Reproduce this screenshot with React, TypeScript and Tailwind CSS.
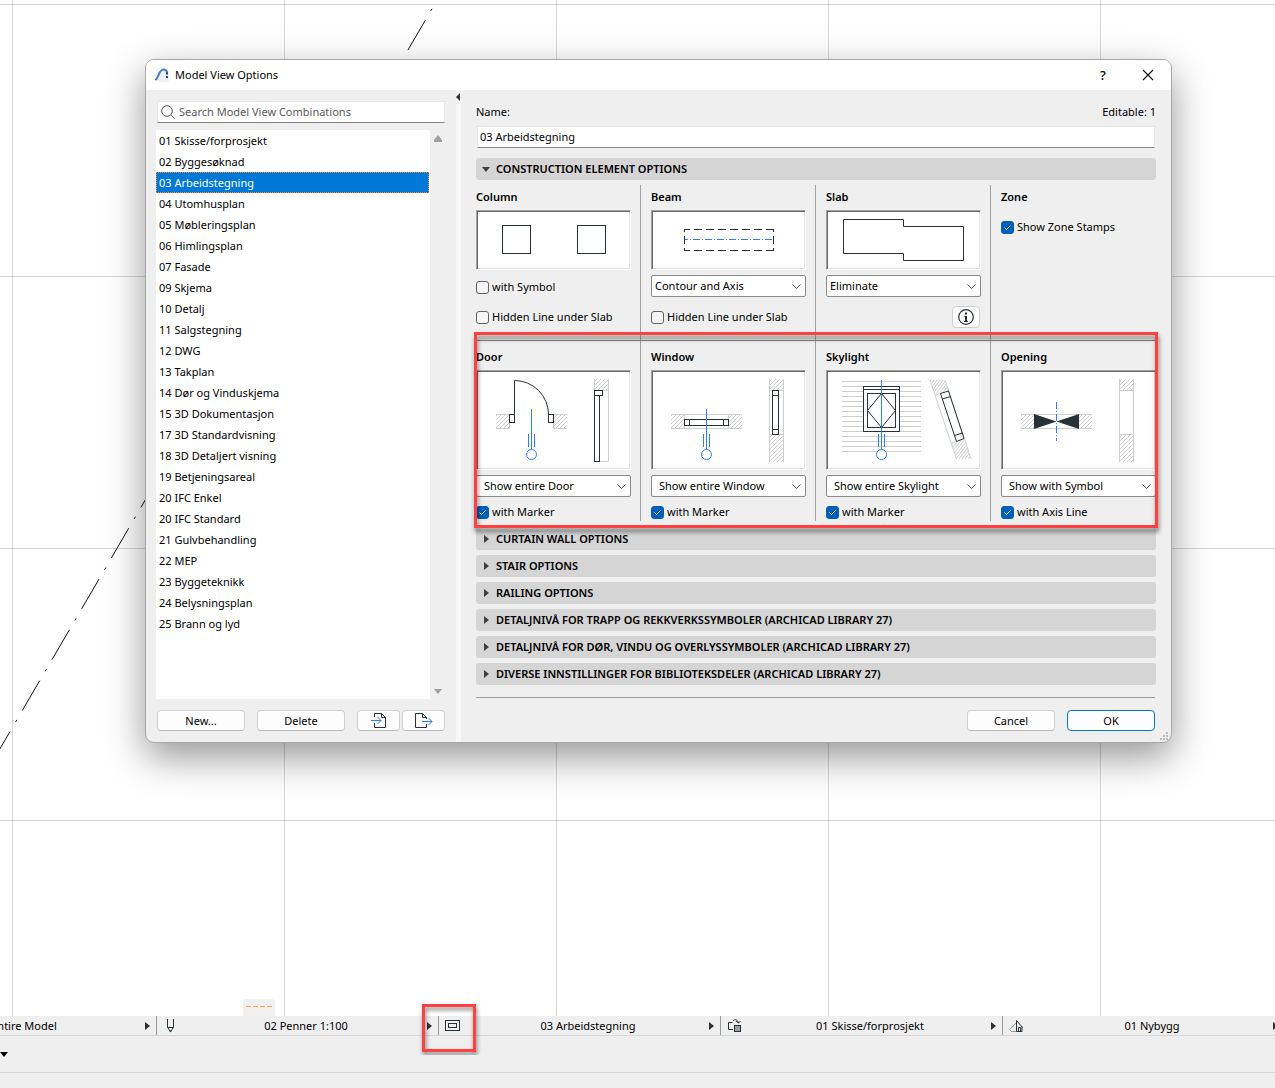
import type { ReactNode } from "react";

const COMBINATIONS = [
  "01 Skisse/forprosjekt",
  "02 Byggesøknad",
  "03 Arbeidstegning",
  "04 Utomhusplan",
  "05 Møbleringsplan",
  "06 Himlingsplan",
  "07 Fasade",
  "09 Skjema",
  "10 Detalj",
  "11 Salgstegning",
  "12 DWG",
  "13 Takplan",
  "14 Dør og Vinduskjema",
  "15 3D Dokumentasjon",
  "17 3D Standardvisning",
  "18 3D Detaljert visning",
  "19 Betjeningsareal",
  "20 IFC Enkel",
  "20 IFC Standard",
  "21 Gulvbehandling",
  "22 MEP",
  "23 Byggeteknikk",
  "24 Belysningsplan",
  "25 Brann og lyd",
];

const COLLAPSED_SECTIONS = [
  "CURTAIN WALL OPTIONS",
  "STAIR OPTIONS",
  "RAILING OPTIONS",
  "DETALJNIVÅ FOR TRAPP OG REKKVERKSSYMBOLER (ARCHICAD LIBRARY 27)",
  "DETALJNIVÅ FOR DØR, VINDU OG OVERLYSSYMBOLER (ARCHICAD LIBRARY 27)",
  "DIVERSE INNSTILLINGER FOR BIBLIOTEKSDELER (ARCHICAD LIBRARY 27)",
];

const INK = "#263238";
const BLUE = "#2b7fff";
const GREY = "#cfcfcf";

/* ---------- small controls ---------- */

function Arrow({ dir }: { dir: "up" | "down" | "left" | "right" }) {
  const points = {
    up: "0,8 0,6 4,1 8,6 8,8",
    down: "0,2 8,2 4,7",
    left: "5,0 5,8 1,4",
    right: "2,0 2,8 7,4",
  };
  return (
    <svg width="8" height="8" viewBox="0 0 8 8" fill="currentColor" className="shrink-0" aria-hidden="true">
      <polygon points={points[dir]} />
    </svg>
  );
}

function Check({ label, checked = false }: { label: string; checked?: boolean }) {
  return (
    <label className="flex items-center gap-[3px]">
      <span className="grid shrink-0">
        <input
          type="checkbox"
          defaultChecked={checked}
          className="peer col-start-1 row-start-1 size-[13px] appearance-none rounded-[3px] border border-[#626262] bg-[#f5f5f5] checked:border-[#005fb8] checked:bg-[#005fb8]"
        />
        <svg
          width="13"
          height="13"
          viewBox="0 0 13 13"
          className="pointer-events-none invisible col-start-1 row-start-1 peer-checked:visible"
          aria-hidden="true"
        >
          <path d="M3.5 6.5l2 2 4-4" fill="none" stroke="#fff" />
        </svg>
      </span>
      {label}
    </label>
  );
}

function Select({ label, value, inset = false }: { label: string; value: string; inset?: boolean }) {
  return (
    <div className="mt-[5px] grid items-center">
      <select
        aria-label={label}
        defaultValue={value}
        className={`col-start-1 row-start-1 h-[22px] w-full appearance-none rounded-[2px] border border-[#8a8a8a] bg-white pr-5 ${
          inset ? "pl-[7px]" : "pl-[3px]"
        }`}
      >
        <option>{value}</option>
      </select>
      <svg
        width="10"
        height="8"
        viewBox="0 0 10 8"
        className="pointer-events-none col-start-1 row-start-1 mr-1 justify-self-end"
        aria-hidden="true"
      >
        <path d="M.5 2.500l4 4 4-4" fill="none" stroke="#555" />
      </svg>
    </div>
  );
}

function PushButton({ children, primary = false }: { children: ReactNode; primary?: boolean }) {
  return (
    <button
      type="button"
      className={`h-[21px] w-[88px] rounded-[4px] border bg-[#fdfdfd] ${
        primary ? "border-[#0078d4]" : "border-[#d0d0d0] border-b-[#bbbbbb]"
      }`}
    >
      {children}
    </button>
  );
}

function Preview({ tall = false, children }: { tall?: boolean; children: ReactNode }) {
  return (
    <div
      className={`mt-[5px] border border-t-[#a0a0a0] border-r-white border-b-white border-l-[#a0a0a0] bg-white shadow-[inset_1px_1px_0_#696969,inset_-1px_-1px_0_#e3e3e3] ${
        tall ? "h-[100px]" : "h-[60px]"
      }`}
    >
      <svg width="153" height={tall ? 98 : 58} fill="none" stroke={INK} aria-hidden="true">
        {children}
      </svg>
    </div>
  );
}

function Cell({ title, last = false, children }: { title: string; last?: boolean; children: ReactNode }) {
  return (
    <div className={last ? "" : "-mr-[10px] border-r border-[#a0a0a0] pr-[9px]"}>
      <div className="group-data-[row=top]:pt-1 group-data-[row=bottom]:pt-2">
        <h3 className="h-4 font-semibold">{title}</h3>
        {children}
      </div>
    </div>
  );
}

/* ---------- element drawings ---------- */

function HatchDefs() {
  return (
    <svg width="0" height="0" className="absolute" aria-hidden="true">
      <defs>
        <pattern id="hatch" width="4" height="4" patternUnits="userSpaceOnUse">
          <path d="M-1 1l2-2M0 4l4-4M3 5l2-2" stroke={GREY} strokeWidth="1" />
        </pattern>
        <pattern id="hatch-steep" width="3" height="4" patternUnits="userSpaceOnUse">
          <path d="M-1 1.3l2-2.6M0 4l3-4M2 5.3l2-2.6" stroke={GREY} strokeWidth="1" />
        </pattern>
      </defs>
    </svg>
  );
}

function Marker() {
  return (
    <g stroke={BLUE}>
      <path d="M54.5 38v40M51.5 63v13M57.5 63v13" />
      <circle cx="54.5" cy="83.5" r="5" fill="#fff" />
    </g>
  );
}

function ColumnDrawing() {
  return (
    <>
      <rect x="25.5" y="14.5" width="28" height="28" />
      <rect x="100.5" y="14.5" width="28" height="28" />
    </>
  );
}

function BeamDrawing() {
  return (
    <>
      <path d="M32 18.5h90M32 39.5h90" strokeDasharray="8 4" strokeDashoffset="2" />
      <path d="M32.5 18v3M32.5 25v8M32.5 37v3M121.5 18v3M121.5 25v8M121.5 37v3" />
      <path d="M33 28.5h88" stroke={BLUE} strokeDasharray="7 2 1 2" strokeDashoffset="4" />
    </>
  );
}

function SlabDrawing() {
  return <path d="M16.5 8.5h60v7h60v34h-60v-7h-60z" />;
}

function DoorDrawing() {
  return (
    <>
      <rect x="19" y="43" width="14" height="15" fill="url(#hatch)" stroke="none" />
      <rect x="76" y="43" width="14" height="15" fill="url(#hatch)" stroke="none" />
      <path d="M19 43.5h14M19 57.5h13.5v-6M90 43.5H76M90 57.5H76.5v-6" stroke={GREY} />
      <rect x="32.5" y="43.5" width="5" height="8" fill="#fff" />
      <rect x="71.5" y="43.5" width="5" height="8" fill="#fff" />
      <path d="M37.5 44V9.5a34 34 0 0 1 34 34" />
      <rect x="117" y="8" width="15" height="12" fill="url(#hatch)" stroke="none" />
      <path d="M117.5 8v12M117 19.5h14M131.5 8v82.5h-9" stroke={GREY} />
      <rect x="117.5" y="19.5" width="8" height="5" fill="#fff" />
      <rect x="117.5" y="24.5" width="5" height="66" fill="#fff" />
      <Marker />
    </>
  );
}

function WindowDrawing() {
  return (
    <>
      <rect x="19" y="43" width="14" height="15" fill="url(#hatch)" stroke="none" />
      <rect x="76" y="43" width="14" height="15" fill="url(#hatch)" stroke="none" />
      <path d="M19 43.5h71M19 57.5h71M32.5 43v15M76.5 43v15" stroke={GREY} />
      <rect x="32.5" y="48.5" width="44" height="6" fill="#fff" />
      <path d="M37.5 48v6M71.5 48v6" />
      <rect x="117" y="8" width="15" height="12" fill="url(#hatch)" stroke="none" />
      <rect x="117" y="63" width="15" height="28" fill="url(#hatch)" stroke="none" />
      <path d="M117.5 8v83M131.5 8v83M117 19.5h15M117 63.5h15" stroke={GREY} />
      <rect x="120.5" y="19.5" width="6" height="44" fill="#fff" />
      <path d="M120 24.5h6M120 58.5h6" />
      <Marker />
    </>
  );
}

function SkylightDrawing() {
  return (
    <>
      {Array.from({ length: 15 }, (_, i) => (
        <path key={i} d={`M15 ${10.5 + i * 5}h79`} stroke={GREY} />
      ))}
      <rect x="36.5" y="15.5" width="36" height="45" fill="#fff" />
      <path d="M36 18.5h37" />
      <rect x="40.5" y="22.5" width="28" height="34" />
      <path d="M54.5 22.5l14 17-14 17-14-17z" />
      <path d="M54.5 9v30" stroke={BLUE} />
      <path d="M103 9h15l4.5 11-13.5 4z" fill="url(#hatch-steep)" stroke="none" />
      <path d="M124.5 72l13-4.5 6 20.5h-14z" fill="url(#hatch-steep)" stroke="none" />
      <path d="M103 9l26.5 79M118 9l26 79M108.5 24l5-2M124.5 72l5-1.5" stroke={GREY} />
      <path d="M113.5 22.5l8-2.5 15.5 47.5-7.5 3z" fill="#fff" />
      <path d="M115.5 28l8-2.5M127.5 64.5l8-2.5" />
      <Marker />
    </>
  );
}

function OpeningDrawing() {
  return (
    <>
      <rect x="19" y="43" width="13" height="15" fill="url(#hatch)" stroke="none" />
      <rect x="77" y="43" width="13" height="15" fill="url(#hatch)" stroke="none" />
      <path d="M19 43.5h71M19 57.5h71" stroke={GREY} />
      <path d="M32 43l22.5 7.5L32 58zM77 43l-22.5 7.5L77 58z" fill={INK} stroke="none" />
      <path d="M54.5 31v39" stroke={BLUE} strokeDasharray="7 2 1 2" />
      <rect x="117" y="8" width="15" height="12" fill="url(#hatch)" stroke="none" />
      <rect x="117" y="63" width="15" height="28" fill="url(#hatch)" stroke="none" />
      <path d="M117.5 8v83M131.5 8v83M117 19.5h15M117 63.5h15" stroke={GREY} />
    </>
  );
}

/* ---------- dialog ---------- */

function TitleBar() {
  return (
    <header className="flex h-[30px] items-center bg-white pr-[15px] pl-2">
      <svg width="16" height="16" viewBox="0 0 16 16" aria-hidden="true">
        <rect x="3" y="4" width="12" height="11" rx="2" fill="#eef2fa" />
        <path
          d="M2 12.5C4.5 10.5 5 2.500 9.500 2.500c2.500 0 3.500 1.500 3.500 3.500"
          fill="none"
          stroke="#4a78d0"
          strokeWidth="2"
          strokeLinecap="round"
        />
        <path d="M12 5.500h2v2h-2zM12 9h2v2h-2z" fill="#1e3f8a" />
      </svg>
      <h1 className="ml-[5px] flex-1">Model View Options</h1>
      <button type="button" aria-label="Help" className="w-6 text-[13px] font-medium">
        ?
      </button>
      <button type="button" aria-label="Close" className="ml-[25px] flex w-4 justify-center">
        <svg width="12" height="12" viewBox="0 0 12 12" aria-hidden="true">
          <path d="M1 1l10 10M11 1L1 11" stroke="#111" strokeWidth="1.1" />
        </svg>
      </button>
    </header>
  );
}

function CombinationsPanel() {
  return (
    <aside className="flex w-[310px] shrink-0 flex-col px-[10px] py-[11px]">
      <label className="mx-px flex h-[22px] items-center gap-1 border border-[#e5e5e5] border-b-[#868686] bg-white pl-[3px]">
        <svg width="14" height="14" viewBox="0 0 14 14" fill="none" stroke="#555" aria-hidden="true">
          <circle cx="6" cy="6" r="5.3" />
          <path d="M10 10l3.7 3.7" />
        </svg>
        <input
          type="text"
          aria-label="Search"
          placeholder="Search Model View Combinations"
          className="min-w-0 flex-1 bg-transparent outline-none placeholder:text-[#5c5c5c]"
        />
      </label>

      <div className="mt-[7px] flex flex-1">
        <ul className="flex-1 bg-white">
          {COMBINATIONS.map((name, i) => (
            <li
              key={name}
              className={`mr-px h-[21px] pl-[3px] leading-[22px] ${
                i === 2 ? "bg-[#0078d7] text-white outline-1 -outline-offset-1 outline-dotted outline-[#ff8728]" : ""
              }`}
            >
              {name}
            </li>
          ))}
        </ul>
        <div className="flex w-4 flex-col items-center justify-between py-1 text-[#a0a0a0]">
          <Arrow dir="up" />
          <Arrow dir="down" />
        </div>
      </div>

      <div className="mx-px mt-[11px] flex">
        <PushButton>New...</PushButton>
        <div className="ml-3">
          <PushButton>Delete</PushButton>
        </div>
        <div className="ml-3 flex flex-1 gap-[2px]">
          <button
            type="button"
            aria-label="Import"
            className="flex h-[21px] flex-1 items-center justify-center rounded-[4px] border border-[#d0d0d0] border-b-[#bbbbbb] bg-[#fdfdfd]"
          >
            <svg width="18" height="17" viewBox="0 0 18 17" fill="none" aria-hidden="true">
              <path d="M4.5 5V1.5h7l4 4v10h-11V11M11.5 1.5v4h4" stroke={INK} />
              <path d="M1 8.5h10M7.5 5l3.5 3.5L7.5 12" stroke={BLUE} />
            </svg>
          </button>
          <button
            type="button"
            aria-label="Export"
            className="flex h-[21px] flex-1 items-center justify-center rounded-[4px] border border-[#d0d0d0] border-b-[#bbbbbb] bg-[#fdfdfd]"
          >
            <svg width="18" height="17" viewBox="0 0 18 17" fill="none" aria-hidden="true">
              <path d="M11.5 7V5.5l-4-4h-7v14h11V12M7.5 1.5v4h4" stroke={INK} />
              <path d="M7 9.500h10M13.500 6l3.500 3.500-3.500 3.500" stroke={BLUE} />
            </svg>
          </button>
        </div>
      </div>
    </aside>
  );
}

function SectionHeader({ title, open = false }: { title: string; open?: boolean }) {
  return (
    <button
      type="button"
      aria-expanded={open}
      className="flex h-[22px] w-full items-center gap-[6px] rounded-[3px] bg-[#d5d5d5] pl-[6px] text-left font-semibold"
    >
      <span className="text-[#404040]">
        <Arrow dir={open ? "down" : "right"} />
      </span>
      {title}
    </button>
  );
}

function OptionsPanel() {
  return (
    <section className="flex min-w-0 flex-1 flex-col px-[15px] pt-[14px] pb-[11px]">
      <div className="flex h-4 justify-between">
        <label htmlFor="combination-name">Name:</label>
        <span>Editable: 1</span>
      </div>
      <input
        id="combination-name"
        type="text"
        defaultValue="03 Arbeidstegning"
        className="mx-px mt-[6px] h-[22px] border border-[#e5e5e5] border-b-[#868686] bg-white px-[2px] pb-[2px] outline-none"
      />

      <div className="mt-[10px]">
        <SectionHeader title="CONSTRUCTION ELEMENT OPTIONS" open />
      </div>

      <div data-row="top" className="group mt-[5px] grid h-[155px] grid-cols-4 gap-x-5">
        <Cell title="Column">
          <Preview>
            <ColumnDrawing />
          </Preview>
          <div className="mt-[5px] flex h-6 items-center">
            <Check label="with Symbol" />
          </div>
          <div className="mt-[6px] flex h-6 items-center">
            <Check label="Hidden Line under Slab" />
          </div>
        </Cell>
        <Cell title="Beam">
          <Preview>
            <BeamDrawing />
          </Preview>
          <Select label="Beam display" value="Contour and Axis" />
          <div className="mt-2 flex h-6 items-center">
            <Check label="Hidden Line under Slab" />
          </div>
        </Cell>
        <Cell title="Slab">
          <Preview>
            <SlabDrawing />
          </Preview>
          <Select label="Slab display" value="Eliminate" />
          <div className="mt-2 mr-px flex h-6 items-center justify-end">
            <button
              type="button"
              aria-label="Info"
              className="flex h-[22px] w-7 items-center justify-center rounded-[4px] border border-[#d0d0d0] bg-[#fdfdfd]"
            >
              <svg width="16" height="16" viewBox="0 0 16 16" fill="none" stroke={INK} aria-hidden="true">
                <circle cx="8" cy="8" r="7.300" strokeWidth="1.2" />
                <path d="M8 7v5.500M8 3.500v2" strokeWidth="2" />
                <path d="M6.500 7.500h2M6 12.500h4" />
              </svg>
            </button>
          </div>
        </Cell>
        <Cell title="Zone" last>
          <div className="mt-[11px] flex h-[22px] items-center">
            <Check label="Show Zone Stamps" checked />
          </div>
        </Cell>
      </div>

      <div data-row="bottom" className="group relative grid h-[181px] grid-cols-4 gap-x-5 border-t border-[#8c8c8c]">
        <Cell title="Door">
          <Preview tall>
            <DoorDrawing />
          </Preview>
          <Select label="Door display" value="Show entire Door" inset />
          <div className="mt-[7px]">
            <Check label="with Marker" checked />
          </div>
        </Cell>
        <Cell title="Window">
          <Preview tall>
            <WindowDrawing />
          </Preview>
          <Select label="Window display" value="Show entire Window" inset />
          <div className="mt-[7px]">
            <Check label="with Marker" checked />
          </div>
        </Cell>
        <Cell title="Skylight">
          <Preview tall>
            <SkylightDrawing />
          </Preview>
          <Select label="Skylight display" value="Show entire Skylight" inset />
          <div className="mt-[7px]">
            <Check label="with Marker" checked />
          </div>
        </Cell>
        <Cell title="Opening" last>
          <Preview tall>
            <OpeningDrawing />
          </Preview>
          <Select label="Opening display" value="Show with Symbol" inset />
          <div className="mt-[7px]">
            <Check label="with Axis Line" checked />
          </div>
        </Cell>
        {/* red callout around the opening types */}
        <div className="pointer-events-none absolute -inset-x-[2px] -top-[9px] -bottom-[7px] border-[3px] border-[#ff4040] drop-shadow-[1px_4px_2px_rgba(0,0,0,0.5)]" />
      </div>

      <div className="mt-[7px] flex flex-col gap-[5px]">
        {COLLAPSED_SECTIONS.map((title) => (
          <SectionHeader key={title} title={title} />
        ))}
      </div>

      <div className="mt-3 mr-px flex justify-end gap-3 border-t border-[#a0a0a0] pt-3">
        <PushButton>Cancel</PushButton>
        <PushButton primary>OK</PushButton>
      </div>
    </section>
  );
}

function ModelViewDialog() {
  return (
    <div
      role="dialog"
      aria-label="Model View Options"
      className="relative overflow-hidden rounded-[9px] border border-[#a8a8a8] bg-[#efefef] shadow-[0_14px_38px_rgba(0,0,0,0.42)]"
    >
      <TitleBar />
      <div className="flex">
        <CombinationsPanel />
        <div className="flex w-[5px] shrink-0 flex-col items-center bg-[#f7f7f7] pt-[3px] text-[#303030]">
          <Arrow dir="left" />
        </div>
        <OptionsPanel />
      </div>
      <svg width="9" height="9" viewBox="0 0 9 9" fill="#bdbdbd" className="absolute right-[2px] bottom-[1px]" aria-hidden="true">
        <path d="M6 0h2v2H6zM3 3h2v2H3zM6 3h2v2H6zM0 6h2v2H0zM3 6h2v2H3zM6 6h2v2H6z" />
      </svg>
    </div>
  );
}

/* ---------- quick options bar ---------- */

function PenIcon() {
  return (
    <svg width="16" height="16" viewBox="0 0 16 16" fill="none" stroke={INK} aria-hidden="true">
      <path d="M4.5 1v8l3 5 3-5V1M4.5 9.500h6" />
      <path d="M6.500 12.500h2l-1 2z" fill={INK} stroke="none" />
    </svg>
  );
}

function ViewIcon() {
  return (
    <svg width="16" height="16" viewBox="0 0 16 16" fill="none" stroke={INK} aria-hidden="true">
      <rect x=".5" y="2.5" width="14" height="10" />
      <rect x="3.5" y="5.5" width="8" height="4" />
    </svg>
  );
}

function OverrideIcon() {
  return (
    <svg width="16" height="16" viewBox="0 0 16 16" fill="none" stroke={INK} aria-hidden="true">
      <path d="M6 11.500H1.500v-7h4" />
      <rect x="7.5" y="7.5" width="6" height="6" fill="#9aa0a4" />
      <path d="M6 3C7.500 1 10.500 1 11.500 5M9 3l2.500 2L13.500 3" />
    </svg>
  );
}

function RenovationIcon() {
  return (
    <svg width="16" height="16" viewBox="0 0 16 16" fill="none" stroke={INK} aria-hidden="true">
      <path d="M7.5 4.500L.700 11.500l1.500 2h5" stroke="#9a9a9a" />
      <path d="M13.500 9.500L7.500 2.500v11h5.500v-5M9.500 13.500v-4h2v4" />
    </svg>
  );
}

function BarItem({ icon, text, marked = false }: { icon?: ReactNode; text: string; marked?: boolean }) {
  return (
    <div className="relative w-[282px] shrink-0">
      <button type="button" className="flex h-[19px] w-full items-center border-l border-[#9a9a9a] pr-[5px] pl-[6px]">
        <span className="w-4">{icon}</span>
        <span className="flex-1 pl-2">{text}</span>
        <span className="text-[#303030]">
          <Arrow dir="right" />
        </span>
      </button>
      {marked && (
        <div className="pointer-events-none absolute -top-3 -left-4 h-12 w-[54px] border-[3px] border-[#ff4040] drop-shadow-[1px_3px_2px_rgba(0,0,0,0.5)]" />
      )}
    </div>
  );
}

export default function App() {
  return (
    <div className="flex min-h-screen flex-col bg-white font-['Noto_Sans','Open_Sans',sans-serif] text-[11px] leading-4 text-black">
      <HatchDefs />
      <main className="relative flex-1 overflow-hidden bg-[linear-gradient(to_right,#d6d6d6_1px,transparent_1px),linear-gradient(to_bottom,#d6d6d6_1px,transparent_1px)] bg-[size:272px_272px] bg-[position:12px_4px] pt-[59px] pr-[103px] pb-20 pl-[145px]">
        <svg width="460" height="760" className="absolute top-0 left-0" aria-hidden="true">
          <path d="M454.96 -30.5L-2 752.1" stroke="#111" strokeDasharray="34.5 11 2.5 10.82" />
        </svg>
        <ModelViewDialog />
        <div className="absolute bottom-0 left-[243px] flex h-[17px] w-8 items-center justify-center rounded-t-[4px] bg-[#f0f0f0]">
          <svg width="26" height="3" aria-hidden="true">
            <path d="M0 .5h26" stroke="#ff9e4a" strokeDasharray="5 2" />
          </svg>
        </div>
      </main>

      <footer className="relative bg-[#efefef]">
        <div className="border-b border-[#d6d6d6]">
          <div className="flex w-full [clip-path:inset(-20px_0)]">
            <div className="-ml-[126px] flex w-0 min-w-0 flex-1">
              <BarItem text="Entire Model" />
              <BarItem icon={<PenIcon />} text="02 Penner 1:100" />
              <BarItem icon={<ViewIcon />} text="03 Arbeidstegning" marked />
              <BarItem icon={<OverrideIcon />} text="01 Skisse/forprosjekt" />
              <BarItem icon={<RenovationIcon />} text="01 Nybygg" />
            </div>
          </div>
        </div>
        <div className="flex h-[37px] items-center border-b border-[#d6d6d6] text-black">
          <Arrow dir="down" />
        </div>
        <div className="h-[15px]" />
      </footer>
    </div>
  );
}
